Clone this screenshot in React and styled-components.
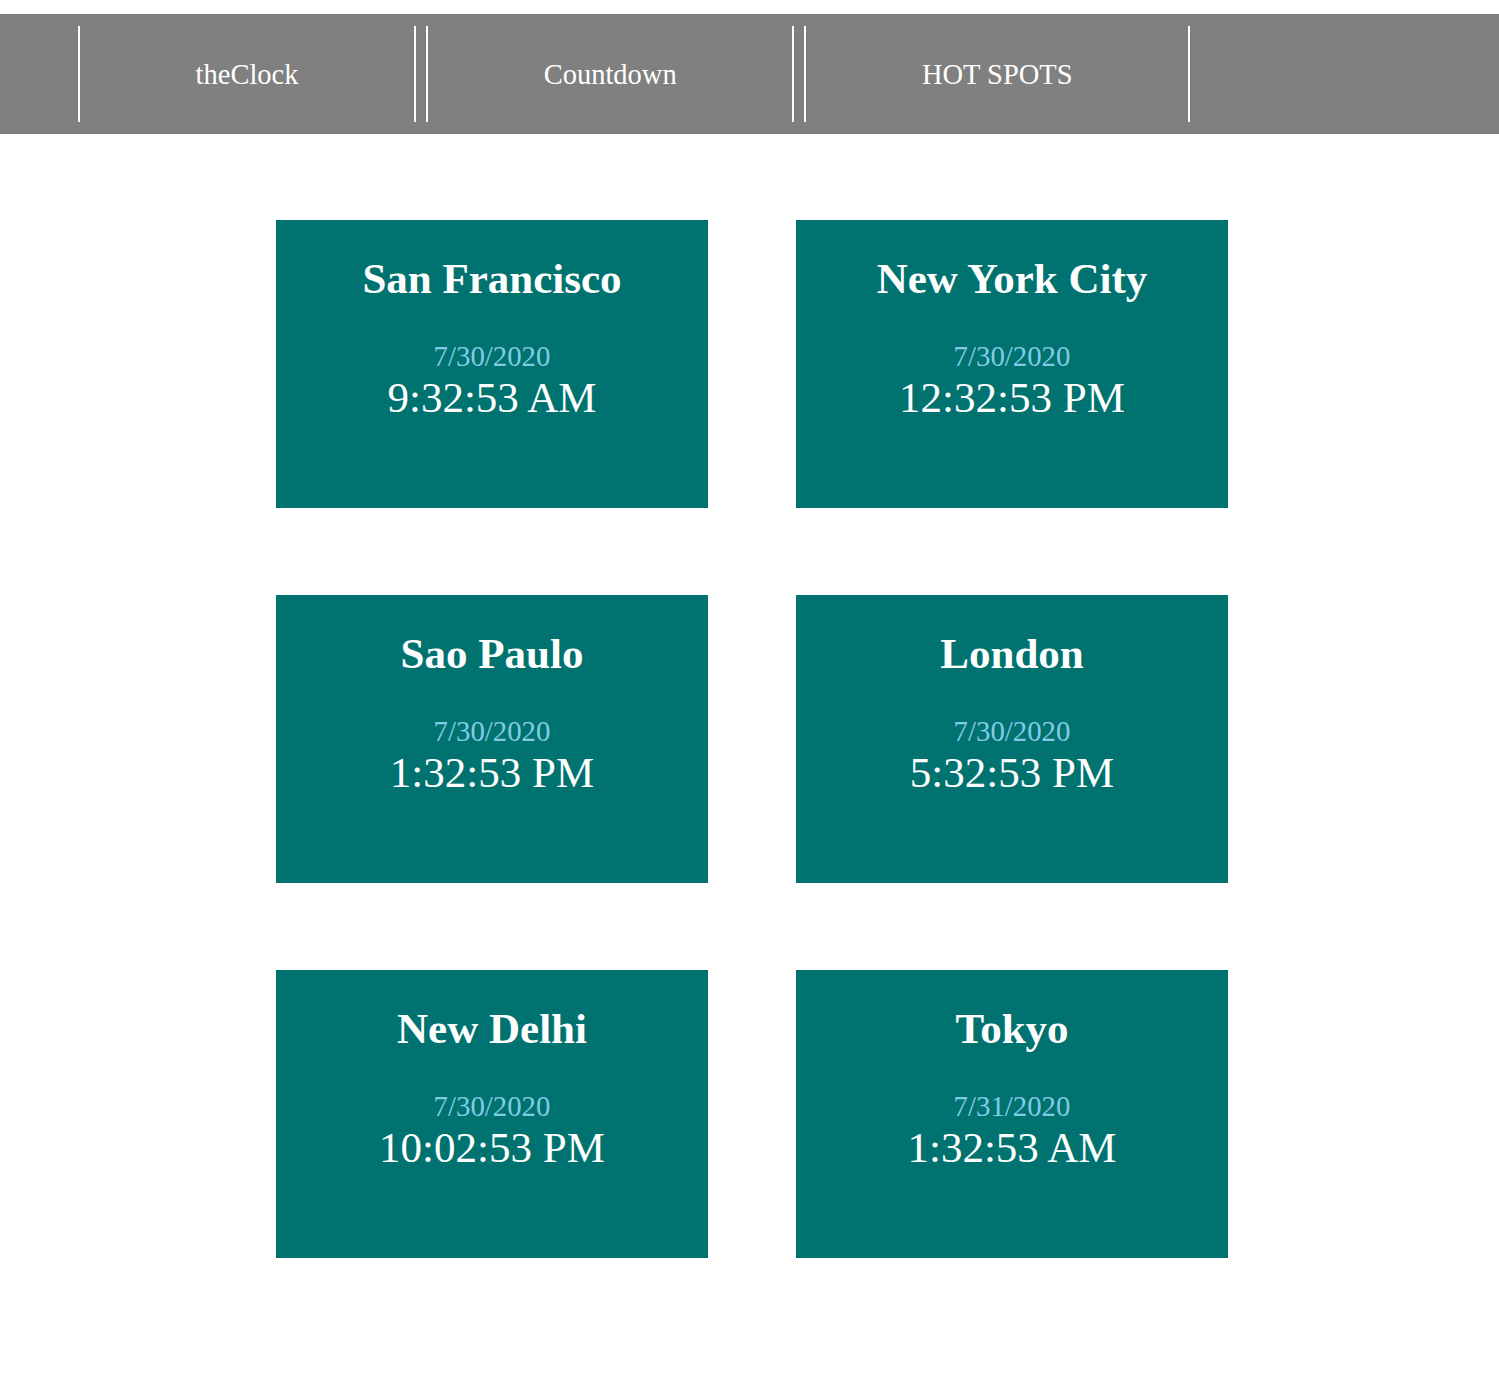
import React from 'react'
import styled, { createGlobalStyle } from 'styled-components'

const GlobalStyle = createGlobalStyle`
  body {
    margin: 0;
    background: #fff;
    font-family: "Liberation Serif", "Times New Roman", serif;
  }
`

const NavBar = styled.nav`
  display: flex;
  align-items: center;
  gap: 10px;
  margin-top: 14px;
  padding: 12px 0 12px 78px;
  background-color: #808080;
`

const NavItem = styled.a`
  display: flex;
  align-items: center;
  justify-content: center;
  height: 96px;
  padding: 2px 115.6px 0;
  box-sizing: border-box;
  border-left: 2px solid #fff;
  border-right: 2px solid #fff;
  color: #fff;
  font-size: 28.5px;
  line-height: 1;
  text-decoration: none;
  cursor: pointer;
`

const Grid = styled.main`
  display: grid;
  grid-template-columns: repeat(2, 432px);
  column-gap: 88px;
  row-gap: 87px;
  margin: 86px 0 0 276px;
`

const Card = styled.section`
  display: flex;
  flex-direction: column;
  align-items: center;
  height: 288px;
  padding-top: 37px;
  box-sizing: border-box;
  background-color: #007370;
  color: #fff;
`

const City = styled.h2`
  margin: 0;
  font-size: 43px;
  font-weight: 700;
  line-height: 1;
`

const DateText = styled.div`
  margin-top: 42px;
  color: #82cbe6;
  font-size: 28.8px;
  line-height: 1;
`

const TimeText = styled.div`
  margin-top: 5px;
  font-size: 43px;
  line-height: 1;
`

const clocks = [
  { city: 'San Francisco', date: '7/30/2020', time: '9:32:53 AM' },
  { city: 'New York City', date: '7/30/2020', time: '12:32:53 PM' },
  { city: 'Sao Paulo', date: '7/30/2020', time: '1:32:53 PM' },
  { city: 'London', date: '7/30/2020', time: '5:32:53 PM' },
  { city: 'New Delhi', date: '7/30/2020', time: '10:02:53 PM' },
  { city: 'Tokyo', date: '7/31/2020', time: '1:32:53 AM' }
]

export default function App() {
  return (
    <>
      <GlobalStyle />
      <NavBar>
        <NavItem>theClock</NavItem>
        <NavItem>Countdown</NavItem>
        <NavItem>HOT SPOTS</NavItem>
      </NavBar>
      <Grid>
        {clocks.map(c => (
          <Card key={c.city}>
            <City>{c.city}</City>
            <DateText>{c.date}</DateText>
            <TimeText>{c.time}</TimeText>
          </Card>
        ))}
      </Grid>
    </>
  )
}
